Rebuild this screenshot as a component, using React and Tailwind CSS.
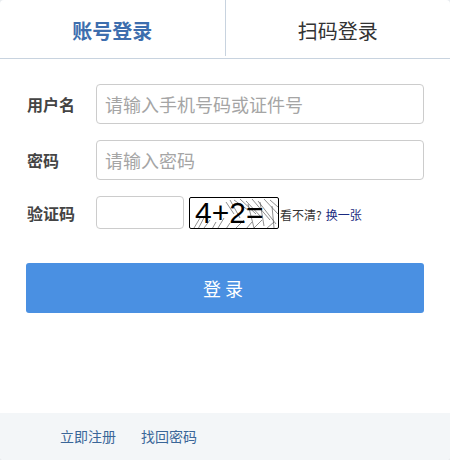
import React from 'react';

const font = { fontFamily: '"Noto Sans CJK SC", "Noto Sans", sans-serif' };

const Captcha = () => (
  <div className="relative w-[90px] h-[32px] border border-black rounded-[2px] bg-white overflow-hidden flex items-center">
    <svg className="absolute inset-0" width="90" height="32" viewBox="0 0 90 32">
      <g stroke="#444" strokeWidth="0.6" fill="none">
        <path d="M4 30 L10 20 M8 31 L16 16 M14 30 L20 22 M22 31 L26 24 M28 30 L34 20 M36 31 L40 25" />
        <path d="M44 2 L58 12 M50 1 L66 16 M56 3 L72 20 M62 1 L80 22 M68 3 L86 26 M74 1 L88 16 M80 2 L88 9" />
        <path d="M46 30 L54 22 M56 31 L62 24 M64 30 L72 22 M76 31 L84 24" />
        <path d="M58 6 L64 30 M70 4 L74 28 M82 8 L84 30" />
        <path d="M36 4 L44 16 M40 2 L50 20" />
      </g>
    </svg>
    <span className="relative ml-[5px] text-[30px] leading-none text-black" style={{ fontFamily: '"Liberation Sans", sans-serif' }}>
      4+2=
    </span>
  </div>
);

const Row = ({ label, children }) => (
  <div className="flex items-center">
    <label className="w-[70px] pl-[1px] text-[16px] font-bold text-[#444]">{label}</label>
    {children}
  </div>
);

const App = () => {
  return (
    <div className="w-[450px] h-[460px] bg-[#e8ecef]" style={font}>
      <div className="w-full h-full bg-white rounded-[4px] flex flex-col overflow-hidden">
        {/* Tabs */}
        <div className="flex h-[59px] border-b border-[#c8d3df] shrink-0">
          <div className="flex-1 flex items-center justify-center pt-[3px] text-[20px] font-bold text-[#3d6eae]">
            账号登录
          </div>
          <div className="w-px bg-[#c8d3df] mb-[2px]" />
          <div className="flex-1 flex items-center justify-center pt-[3px] text-[20px] text-[#333]">
            扫码登录
          </div>
        </div>

        {/* Form */}
        <div className="flex-1 px-[26px] pt-[25px]">
          <div className="flex flex-col gap-[16px]">
            <Row label="用户名">
              <input
                className="flex-1 h-[40px] border border-[#ccc] rounded-[4px] px-[8px] text-[18px] text-[#333] placeholder:text-[#a5a5a5] outline-none"
                placeholder="请输入手机号码或证件号"
              />
            </Row>
            <Row label="密码">
              <input
                type="password"
                className="flex-1 h-[40px] border border-[#ccc] rounded-[4px] px-[8px] text-[18px] text-[#333] placeholder:text-[#a5a5a5] outline-none"
                placeholder="请输入密码"
              />
            </Row>
            <Row label="验证码">
              <input className="w-[88px] h-[33px] border border-[#ccc] rounded-[4px] px-[6px] text-[15px] outline-none" />
              <div className="ml-[5px]">
                <Captcha />
              </div>
              <span className="text-[12px] text-[#333] ml-[1px] mt-[4px]">看不清?</span>
              <a className="text-[12px] text-[#1a2a80] ml-[4px] mt-[4px]">换一张</a>
            </Row>
          </div>

          <button className="mt-[34px] w-full h-[50px] bg-[#4a90e2] rounded-[3px] text-white text-[18px] tracking-[4px]">
            登录
          </button>
        </div>

        {/* Footer */}
        <div className="h-[47px] bg-[#f3f6f8] flex items-center gap-[25px] pl-[60px] text-[14px] text-[#3a6698] shrink-0">
          <a>立即注册</a>
          <a>找回密码</a>
        </div>
      </div>
    </div>
  );
};

export default App;
